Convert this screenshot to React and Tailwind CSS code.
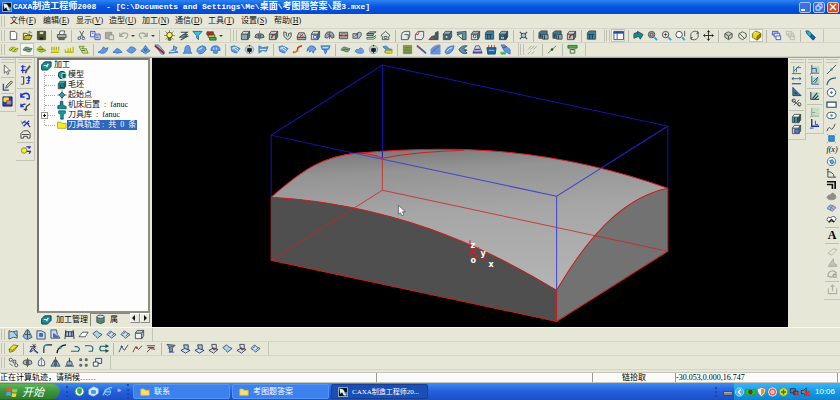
import React, { useState } from 'react';
import clsx from 'clsx';

const K = '#3c4745';
const N = '#3a46b0';
const B = '#7fb2e8';
const T = '#3f7f98';
const Y = '#e3e02a';
const G = '#8d8f88';

// d: path, f: fill, s: stroke
const p = (d, f = 'none', s = K, w = 0.9) => <path d={d} fill={f} stroke={s} strokeWidth={w} />;
const dot = (x, y, r = 1.2, f = 'none', s = K) => <circle cx={x} cy={y} r={r} fill={f} stroke={s} />;

const cube = (front = '#8fa8ac', top = '#cfdcd8', side = T) => (
    <>
        {p('M1.5 4.5h7v6h-7z', front)}
        {p('M1.5 4.5l2-3h7l-2 3z', top)}
        {p('M8.500 4.500l2-3v6l-2 3z', side)}
    </>
);
const sheet = (f = B, s = N) => p('M1 6.500Q3.500 2 6 3.500T11 5Q9 10 6.500 8.500T1 6.500z', f, s);

const icons = {
    // standard
    newFile: p('M2.500 1.500h5l2 2v7h-7z', '#fff'),
    open: <>{p('M1.500 10V3.500h3l1 1h3V6', '#f4ee7a')}{p('M1.500 10.500l2-4.500h7.500l-2 4.500z', '#c9b92c')}{p('M7 2.500q2-2 3.500 1', 'none')}</>,
    save: <>{p('M1.500 1.500h9v9h-9z', '#54561c')}{p('M3.500 1.500h5v3.500h-5z', '#d8d8b8')}{p('M4 8h4v2.500H4z', '#111')}</>,
    print: <>{p('M3.500 5l1-4h5l-1 4', '#fff')}{p('M1.500 5h9.500v3.500h-9.500z', '#b4b4ac')}{p('M3 8.500h6v2H3z', '#7c7c74')}</>,
    cut: <>{p('M4 1l4 7M8.500 1l-4 7', 'none', K)}{dot(3.500, 9, 1.500, 'none', N)}{dot(8, 9, 1.500, 'none', N)}</>,
    copy: <>{p('M.5 1.500h5v6h-5z', '#dfe6ff', N)}{p('M5.500 4.500h5.500v6H5.500z', '#dfe6ff', N)}{p('M6.500 6.500h3M6.500 8.500h3M2 3.500h2', 'none', N)}</>,
    paste: <>{p('M1.500 2.500h7v7h-7z', '#a9aaa2', G)}{p('M5.500 5.500h5v5h-5z', '#deded4', G)}</>,
    undo: <>{p('M2 3v4h4M2.500 6.500Q5 2 9 3.500t-1 6', 'none', '#a0a198', 1.300)}</>,
    redo: <>{p('M10 3v4H6M9.500 6.500Q7 2 3 3.500t1 6', 'none', '#a0a198', 1.300)}</>,
    bulb: <>{p('M6 0v12M0 6h12M1.500 1.500l9 9M10.500 1.500l-9 9', 'none', '#8a8a18')}{dot(6, 5.500, 3, '#fdfb40', K)}{p('M4.500 9h3v2h-3z', '#777')}</>,
    layers: <>{p('M3 2.500h7L4 7h6L3 11', 'none', K, 1.200)}{p('M1.500 8l4-3 5 0-4 3z', '#5b8ce0')}</>,
    filter: p('M1 1.500h10L7 6v4.500l-2-2V6z', '#37c9dc', '#145b88'),
    colors: <>{p('M4 8h7v3H4z', '#2fb340')}{p('M2.500 5h7v3h-7z', Y)}{p('M1 2h7v3.500H1z', '#c02828')}</>,

    // features
    box: cube(),
    boxRed: <>{cube('#b7c4c0')}{p('M4 9q0-4 4-4', 'none', '#b8232a', 1.500)}</>,
    boxBlue: <>{cube('#d3dcf5')}{p('M4 6h3v3H4z', '#fff', N)}</>,
    boxGreen: <>{cube('#7fa89c')}{p('M3 7h3v2H3z', '#fff', '#1b6b45')}</>,
    revolve: <>{p('M6 1v10', 'none', '#28a')}{p('M1 8q0-4 4-4v5zM11 8q0-4-4-4v5z', '#7fa0a0')}</>,
    sweep: <>{p('M2 2q-1 6 4 8.500Q11 9 10 3L7 4q1 3-1 3T5 3z', '#c8d8d4')}</>,
    loft: <>{p('M1.500 8.500h9v2h-9zM3 3h6l2 5H1z', '#bcc9c6')}{p('M4 5l4 2M8 4L4 8', 'none', '#a8303a')}</>,
    wheel: <>{p('M1 8q0-6 5-6t5 6L8.500 9 6 6 3.500 9z', '#9ab')}{p('M6 2v8M3 4l6 3', 'none', '#b12d36')}</>,
    frame: <>{p('M1.500 2.500h9v7h-9z', '#9db9ac')}{p('M3.500 4.500h5v3h-5z', '#fff', '#a33')}{p('M1 6h10', 'none', K)}</>,
    twist: <>{p('M1 4h5v5H1zM6 3q5-2 4 3l-3 4', '#b6c0c8')}{p('M3 7l4-4', 'none', '#339')}</>,
    slab: <>{p('M1 4l3-2h7L8 4zM1 4h7v2H1zM1 8h7l3-2', '#a8c8bd')}{p('M1 8v2h7l3-2', 'none', '#1d6b50')}</>,
    house: <>{p('M1 6l5-4.500L11 6 9.500 7v3.500h-7V7z', '#dfe5df')}{p('M4.500 7h3v2h-3z', '#fff')}</>,
    fillet: <>{p('M1.500 10.500V6q0-4 4-4.500h5v6l-2 3z', '#dfe9ea')}{p('M5 5h4v5.500', 'none', K)}</>,
    chamfer: <>{p('M1.500 10.500V5l3-3.500h6v6l-2 3z', '#dfe9ea')}{p('M1.500 5h3l1-3', 'none', '#a33')}</>,
    rib: <>{p('M1 10.500h10v-9L8 3v3L4 7z', '#3b5f62')}{p('M2 9h5', 'none', '#c44')}</>,
    shell: <>{cube('#56707f', '#8fb8cc')}{p('M3.500 6h3v3h-3z', '#bfe3f7')}</>,
    draft: <>{p('M1 2.500l10-1v9l-4 0z', '#5a93aa')}{p('M1 5l6-1 0 6z', '#d8eef4')}</>,
    hole: <>{cube('#dbe2df', '#aab')}{dot(5, 7, 1.500, '#fff', '#333')}</>,
    array: <>{p('M1.500 3l2-2h7v9h-9z', '#3f7f9c')}{p('M2 5h7M4 5v5M7 5v5', 'none', '#123b4c')}</>,
    mold: <>{cube('#3b6d94', '#79b7d8', '#1b3e5e')}{p('M3 6l2 2 2-2v4H3z', '#cfe9f7', '#135')}</>,
    cross: <>{p('M2 2l8 8M10 2l-8 8', 'none', K, 1.200)}{dot(6, 6, 2.500, '#9cc8d8', '#247')}</>,
    film: <>{p('M1 3l2-2h7v8H1z', '#44758e')}{p('M5 5h6v5H5z', '#77a8c0')}{p('M3 4v4M7 6v4', 'none', '#123')}</>,

    // view
    panel: <>{p('M1 1.500h10.500v9H1z', '#fff', '#223a80')}{p('M1 2h10v1.500H1z', '#2c51a8', '#2c51a8')}{p('M4.500 3v7', 'none', '#223a80')}</>,
    redraw: <>{p('M1 9V4l5-2 5 3-3 5-2-3z', '#108e94')}{p('M5 1v4', 'none', K)}</>,
    zoomAll: <>{p('M8 8l3 3', 'none', '#2ba0d8', 2)}{dot(5, 5, 3.500, '#b8bcc0', '#444')}{p('M3.500 3.500h3v3h-3z', 'none', '#444')}</>,
    zoomIn: <>{p('M8 8l3 3', 'none', '#2ba0d8', 2)}{dot(5, 5, 3.500, '#eee', '#444')}{p('M5 3v4M3 5h4', 'none', K)}</>,
    zoomWin: <>{p('M8 8l2.500 3', 'none', '#2ba0d8', 2)}{dot(4.500, 5, 3.500, '#fff', '#444')}{p('M10.500 1v6', 'none', K)}</>,
    rotate: p('M2 8V4q4-5 8-1M10 4v4q-4 5-8 1M9 1l1.500 2.500L8 4M3 11L1.500 8.500 4 8', 'none'),
    pan: p('M6 .5v11M.5 6h11M4.500 2.500L6 .8l1.500 1.700M4.500 9.500L6 11.200l1.500-1.700M2.500 4.500L.8 6l1.700 1.500M9.500 4.500L11.200 6 9.500 7.500', 'none', '#111'),
    wire: <>{p('M2 4l4-2 4 2v4l-4 2.500-4-2.500z', '#c9cac0')}{p('M2 4l4 2.500 4-2.500M6 6.500V10', 'none')}</>,
    hidden: <>{p('M2 4l4-2 4 2v4l-4 2.500-4-2.500z', '#e9eadc')}{p('M3 4l5 5', 'none')}</>,
    shaded: <>{p('M1.500 4l4-3 5 2.500v4l-4 3.500-5-3z', '#e8dc10', '#6d6600')}{p('M6.500 7l4-3v3.500l-4 3.500z', '#8f8500', '#6d6600')}{p('M3 4l2.500-1.500', 'none', '#fff')}</>,
    windows: <>{p('M1.500 1.500h6v4h-6z', '#c8ccff', N)}{p('M3.500 3.500h6v4h-6z', '#e6e8ff', N)}{p('M5.500 6.500h5v4h-5z', '#fff', N)}</>,
    windowsOff: <>{p('M1.500 1.500h6v4h-6zM3.500 3.500h6v4h-6zM5.500 6.500h5v4h-5z', '#e4e4d8', '#b7b8ad')}</>,
    pen: <>{p('M1 1l3 0 7 7-2 3-7-7z', '#28b4cc', '#0a5468')}{p('M7 5l4 3-2 3-3-3z', '#2268c8', '#123c88')}</>,

    // surface machining
    area: <>{sheet('#dede34', '#90962a')}{p('M3 6.500l3-2M6 7.500l3-2', 'none', '#2d7d3f')}</>,
    contour: <>{sheet('#8fb05c', '#3f6c9a')}{p('M3 6.500q3-2 6 0', 'none', '#24488a')}</>,
    areaAlt: <>{p('M1 6l4-4 1 2 5 3-5 2-3-1z', '#b5c42c', '#6a9030')}{p('M3 6h5', 'none', '#2d5fa0')}</>,
    comb: <>{p('M1 9h9M2 3v4M4.500 3v4M7 3v4M9.500 3v4', 'none', '#b3b30c', 1.400)}{p('M2 8h8', 'none', '#e8e020')}</>,
    combLow: <>{p('M1 9h9M1.500 6v3M4.500 5v4M7 4v5M10 3v6', 'none', '#bcbc0a', 1.400)}</>,
    stepper: <>{p('M1 2.500l6 0-3 2.500h5l2 5H5z', '#dfe052', '#6c8c3c')}{p('M4 7h4', 'none', '#256')}</>,
    wave: p('M0 9q4-1 6-6l2 2 3-1q-2 7-7 6z', '#5f9ae6', '#3a6fc4'),
    mound: p('M1 9q2-1 3-3t4 0l3 3q-5 2-10 0z', '#5f9ae6', '#3a6fc4'),
    swell: p('M1 7q2-1 4-4 4 0 6 3-3 4-5 4-4-1-5-3z', '#5f9ae6', '#3a6fc4'),
    ring: <>{p('M6 1.500l2 3 3 3-5 3-5-3 3-3z', '#5f9ae6', '#3a6fc4')}{dot(6, 6.500, 1, '#dff', '#135')}</>,
    slash: <>{p('M1 1h4l6 7v3H8z', '#9ab8e0', '#3a6fc4')}{p('M1 2l10 8', 'none', '#a0202c', 2)}</>,
    lift: <>{p('M1 10q2-4 5-4V2l4 2-2 3 3 2z', '#6ea4e8', '#3a6fc4')}{p('M2 8h5', 'none', '#fff')}</>,
    bell: p('M1 10q2 0 2-3 0-5 3-5.500t3 5.500q0 3 2 3z', '#5f9ae6', '#3a6fc4'),
    pillow: <>{p('M1 8q0-5 6-6 4 0 4 4-3 5-7 5z', '#5f9ae6', '#3a6fc4')}{p('M3 6l4-2', 'none', '#fff')}</>,
    dome: <>{p('M1 7q0-5 5-5t5 5l-3 0 0 3-4 0V7z', '#5d97e4', '#3a6fc4')}{p('M4 4v2M7 4v2', 'none', '#dff')}</>,
    link: <>{p('M1 3l4-1 6 3-4 5-5-2z', '#5f9ae6', '#3a6fc4')}{p('M2 6q4-5 7 0M3 4l6 4', 'none', '#fff')}</>,
    bee: <>{dot(6, 6, 4.500, '#bcd0e8', '#7aa0cc')}{p('M6 1v9M4 5h4v3H4z', '#222', '#111')}{p('M6 2.500v2', 'none', '#ecd800', 2)}</>,
    knot: <>{p('M1 2l4 2 6-1-2 5-4-1-4 3z', '#5f9ae6', '#3a6fc4')}{p('M2 6h7', 'none', '#fff')}</>,
    gash: <>{p('M1 9q5 0 5-3t5-4', 'none', '#c0382c', 1.600)}{p('M1 11q3-5 7-3', 'none', '#e0a850')}</>,
    wing: <>{p('M1 8q1-6 5-6t5 4L9 7l-1 3-2-3-2 2-1-3z', '#6ba0e8', '#3a6fc4')}</>,
    cup: <>{p('M1 2h10L9.500 6h-7zM4 6l2 5 2-5', '#5f9ae6', '#3a6fc4')}{p('M3 4h6', 'none', '#fff')}</>,
    puddle: p('M1 8q1-3 4-2 1-3 4-1 3 4 0 5-6 1-8-2z', '#6ba0e8', '#4c7fcc'),
    fish: <>{p('M1 3q5-2 6 2l4 1-3 4-5-1 1-3z', '#4f9be0', '#3a6fc4')}{p('M4 7h7v3H4z', '#e8d820', '#a0a018')}</>,
    grass: <>{p('M1.500 1.500h9v9h-9z', '#8c9c38', '#7d8d34')}{p('M2 4h8M2 6.500h8M2 9h8', 'none', '#4f7c5c')}</>,
    trim: <>{p('M1 2l10 8', 'none', '#3a6fc4', 2)}{p('M1 1l10 9', 'none', '#c0384c')}</>,
    curve: <>{p('M1 11V6q3-5 10-5v10z', '#5d97e4', '#5d97e4')}{p('M1 10L10 2', 'none', '#c03a50')}</>,
    scroll: <>{p('M1 9q2-7 10-7-1 8-8 9z', '#5d97e4', '#3a6fc4')}{p('M3 8q3-4 6-4', 'none', '#fff')}</>,
    shellSea: <>{p('M1 6q3-5 9-4L6 5l4 2-3 0 3 3Q4 12 1 6z', '#5c8fa8', '#28506c')}</>,
    tower: <>{p('M1 10l3-8h4l3 8z', '#d4d4ec', '#4b4b90')}{p('M1 9h10M3 6h6', 'none', '#4b4b90', 1.500)}</>,
    basket: <>{p('M1 4h10l-1 7H2z', '#2468a8', '#123c70')}{p('M3 4V1M6 4V1M9 4V1', 'none', '#a03030')}{p('M3 7h6', 'none', '#9fd0e8')}</>,
    parrot: <>{p('M1 1h4l6 5v5L5 8z', '#5d97e4', '#3a6fc4')}{p('M1 9h5v2H1z', '#31c04c', '#31c04c')}{p('M3 4l4-1', 'none', '#d03030', 1.500)}</>,
    hatch: p('M1 6l4-4M4 6l4-4M7 6l4-4M1 11l3-3M5 11l3-3', 'none', '#86ac7a'),
    stroke: <>{p('M1 10l9-8', 'none', '#3b7a34')}{dot(5.500, 6, 1, '#2a5a28', '#2a5a28')}</>,
    drill: <>{p('M1 1.500h10v3H1z', '#49b04c', '#1f6d2c')}{p('M3.500 5v5h5V5', '#dfe8df', '#1f6d2c')}{p('M4 6h4', 'none', '#d02020', 1.500)}</>,

    // left
    pointer: p('M2.500 1v9l2-2 1.500 3.500 1.500-.7L6 7.500h3z', '#fff', K, 0.8),
    pencil: <>{p('M1.500 4v7h6', 'none', N, 1.500)}{p('M4 9l1-3 5-5 1.500 1.500-5 5z', '#c8c8b0')}</>,
    picture: <>{p('M1 1h10v10H1z', '#1f3fd0', '#101060')}{p('M2 2h5v4H2z', '#f0e020', '#f0e020')}{p('M5 5h5v4H5z', '#3fc8c8', '#d03030')}</>,
    sketch: <>{p('M1 3h5M3 1v9M1 7h5', 'none', '#1c2cd0', 1.300)}{p('M6 10l1-3 4-5', 'none', '#555', 2)}</>,
    mirror: <>{p('M1 2h3v8H1M4 2v8', 'none', '#444')}{p('M6.500 3h3v6h-3M9 1l2 2-2 2M8 6h3', 'none', '#1c2cd0', 1.200)}</>,
    turn: p('M1 2.500v4h4M1.500 5.500Q3 2.500 7 2.500q4 1 3 6l-3 0', 'none', '#1c2cd0', 1.500),
    turnAlt: <>{p('M1 2v3h3M1.500 4.500Q3 2 6 2.500', 'none', '#1c2cd0', 1.300)}{p('M6 10l1-5 4-3M4 8h4', 'none', '#444', 1.400)}</>,
    spray: <>{p('M2 6l4-3M4 9l6-6M8 6l3 4M5 5l5 1', 'none', '#1c2cd0', 1.200)}{p('M1 3l3 6', 'none', '#888')}</>,
    car: <>{p('M1 10V5l3-3h5l2 3v5H8V8H4v2zM2 6h8', '#eceadc', '#333')}</>,
    lamp: <>{dot(4.500, 6, 3, '#f3ee30', '#8a8a18')}{p('M7 2h4L9.500 4M7.500 7h4L10 9.500', 'none', '#1c2cd0', 1.400)}</>,

    // right
    chart: <>{p('M1 10.500h10M3 2v8M3 8l6-6M6 9V4l5 0', 'none', '#286c80')}</>,
    measure: <>{p('M1 9.500h10', 'none', '#2b6ccc', 1.500)}{p('M1 4h10M3 2.500L1 4l2 1.500M9 2.500L11 4 9 5.500', 'none', '#31516c')}</>,
    triangle: p('M2 1.500v9h9zM4.500 6.500v2h2z', '#3c7da0', '#163c5c'),
    scissors: <>{p('M1 3l9 7M3 9l6-6', 'none')}{dot(9, 8, 1.800)}{dot(3, 4, 1.800)}</>,
    building: <>{cube('#4a9cc4', '#dff', '#246')}{p('M4 5v5M7 5v5', 'none', '#123')}</>,
    buildingAlt: <>{cube('#bcd', '#eef')}{p('M4 6h5v4H4z', '#5a78c8', N)}</>,
    axis: <>{p('M3 1v8h8V3H3', '#b4d8c0', '#b4d8c0')}{p('M3 1v9h8M3 10L1 11.500M3 5h5v4', 'none', '#2a4a90')}</>,
    axisAlt: <>{p('M3 1v8h8V3H3', '#b4d8c0', '#b4d8c0')}{p('M3 1v9h8M4 8l6-6M6 9q3-2 3-6', 'none', '#2a4a90')}</>,
    axisMove: <>{p('M3 2h8v7H3z', '#b4d8c0', '#b4d8c0')}{p('M2 1v8h9M4 8l5-6M6 9l4-4', 'none', '#234', 1.100)}</>,
    axisDim: <>{p('M3 1h8v8H3z', '#c4e0c4', '#c4e0c4')}{p('M3 1v9h8M1 11l2-1M3 6h4', 'none', '#7e9f90')}</>,
    axisBlue: <>{p('M3 1v8h8', 'none', '#1c2cb0', 1.500)}{p('M7 3v4h3M1 11h4', 'none', '#1c2cb0')}</>,
    line: <>{p('M1 11L11 1', 'none', '#303838')}{dot(6, 6, 1, '#36a0d0', '#36a0d0')}</>,
    arc: p('M1 10Q2 2 11 2', 'none', '#32667c', 1.200),
    circle: <>{dot(6, 6, 4.500, '#fff', '#28486c')}{dot(6, 6, 1, '#2b7cc0', '#2b7cc0')}</>,
    rect: p('M1 3.500h10v5.500H1z', '#fff', '#28486c', 1.300),
    ellipse: <><ellipse cx="6" cy="6" rx="5" ry="3.500" fill="#fff" stroke="#28486c" />{dot(6, 6, 1, '#2b9cd0', '#2b9cd0')}</>,
    spline: p('M1 10q2-6 4-3t5-5', 'none', '#333'),
    point: <>{p('M3 3h6v6H3z', '#2f8fd8', '#2468a8')}{p('M1 1l2 2M11 1L9 3M1 11l2-2M11 11L9 9', 'none', '#8ba8c0')}</>,
    polygon: <>{dot(6, 6, 4.500, '#fff', '#4a6c8c')}{p('M4 5l3-1 2 3-3 2z', '#53b4e8', '#2468a8')}</>,
    graph: p('M2 1v9h9M2 4q6 0 7 6M1 2l1-1 1 1', 'none', '#333'),
    offset: p('M1 3h9v8M1 6h6v5', 'none', '#111', 1.800),
    blob: p('M1 7q1-3 4-3l2-2 3 2q2 4-1 5-6 2-8-2z', '#8d8e84', '#8d8e84'),
    flower: <>{p('M1 7l4-4 6 3-4 4z', '#8cc4f0', '#4878c0')}{p('M3 4l5 4M8 3L4 9', 'none', '#d05070')}</>,
    cloud: <>{p('M1 6q1-4 4-2 4-3 6 1-1 4-5 3-4 2-5-2z', '#fff', '#345')}{p('M3 9l3-3 3 3', 'none', '#222', 1.500)}</>,
    eraser: p('M1 8l6-5 4 1-6 6z', 'none', '#b0b1a6'),
    ramp: p('M1 10.500h10M2 9l5-7v4l4 3z', '#c4c5ba', '#a4a59a'),
    swirl: <>{p('M1 9q0-6 6-6l3 2-5 5zM7 7h3v3H7z', 'none', '#a4a59a', 1.300)}</>,
    anchor: p('M1.500 5v5.500h9V5M6 1v7M4 3l2-2 2 2', 'none', '#b0b1a6', 1.200),

    // surfaces and curve edit
    surfA: <>{p('M1 2l4 1 5-1v8l-4-1-5 2z', '#a9d4f0')}{p('M6 3l4 5', 'none', '#246')}</>,
    surfB: <>{p('M5 1h2l4 8-4 2H4L1 8z', '#8cb8e0')}{p('M6 1v10M3 6h6', 'none', K)}</>,
    surfC: <>{p('M1 2h5l4 2v7H1z', '#c4dcf4', '#345')}{p('M4 5h3v3H4z', '#5870d0', N)}</>,
    surfD: <>{p('M1 1h6l1 5 3 4H1z', '#c4dcf4', '#345')}{p('M4 5l5 4H4z', '#5870d0', N)}</>,
    surfE: <>{p('M2 3h8v5H2z', '#a9c8f0', '#223')}{p('M2 1l-1 10M10 1l1 10M5 3v5M8 3v5', 'none', '#223')}</>,
    plane: p('M1 8.500l4-5h6l-3 5z', '#fff', '#345'),
    quilt: <>{p('M1 5l4-3 2 2 4 2-5 4-2-2z', '#a9d4f0', '#345')}</>,
    quiltLine: <>{p('M1 6l4-4 2 2 4 2-5 4-2-2z', '#cfe4f8', '#345')}{p('M3 6l3-3M6 8l3-3', 'none', N)}</>,
    solid: cube('#eef2ee', '#a9d4f0', '#cde'),
    rubber: <>{p('M1 7l5-5 5 1-5 6-4 1z', '#f0e428', '#6e6a10')}{p('M1 7l4 1 6-5', 'none', '#6e6a10')}</>,
    trimCurve: <>{p('M5 1l3 5-5 4M8 1L6 6l4 4M2 4h7', 'none', '#334')}{p('M2 10l3-5M7 8l4 3', 'none', N, 1.500)}</>,
    corner: <>{p('M2 11V6q0-4 4-4h5', 'none', '#223', 1.200)}{p('M2 6q0-4 4-4', 'none', '#39c', 1.500)}</>,
    bend: <>{p('M1 11q1-5 4-7t6-2', 'none', '#111', 1.400)}{dot(5, 5, 1, '#39c', '#29a')}</>,
    extend: p('M1 9h8q3-3-1-5H5', 'none', '#268', 1.300),
    hook: p('M1 3h6q4 1 2 6H5', 'none', '#268', 1.300),
    parallel: p('M10 3.500H3q-2 2.500 0 5h7M8 2l3 1.500L8 5M8 7l3 1.500L8 10', 'none', '#175a5a', 1.200),
    splineB: <>{p('M1 10l3-6 3 4 4-6', 'none', '#334')}{dot(4, 4, 0.8, N, N)}</>,
    splineR: <>{p('M1 10l3-6 3 3 4-4', 'none', '#334')}{dot(5, 5, 0.8, '#c22', '#c22')}</>,
    splineS: <>{p('M1 3h9M1 10l4-4 5 1', 'none', '#334')}{p('M2 5h7', 'none', '#c22', 1.400)}</>,
    plug: <>{p('M1 1.500l9 1-3 3v4H4v-4z', '#7c9cc0')}{p('M3 10h6M2 6l6-3', 'none', N)}</>,
    patch: <>{p('M4 2h5v6l-4-1z', '#9cc4e4', '#234')}{p('M1 8l4-2 6 2-5 3z', '#cfe4f8', '#234')}</>,
    patchR: <>{p('M4 1.500h5v5l-4 0zM1 8l4-2 6 1-5 4z', '#cfe4f8', '#334')}{p('M6 5l1 3', 'none', '#c22', 1.600)}</>,
    nodes: <>{dot(3, 3, 1.700, '#fff')}{dot(7, 5, 1.700, '#bcd')}{dot(9, 9, 1.700, '#fff')}{p('M2 7l3 3', 'none')}</>,
    mirrorH: <>{p('M6 1v10M2 4l3-1v6L1 7zM10 4L7 3v6l4-2z', '#a8b8b8')}</>,
    drop: <>{p('M6 1Q1 5 3 9.500h6Q11 5 6 1z', '#eef', '#345')}{p('M6 1v9', 'none', '#29c')}</>,
    mirrorV: <>{p('M5 3v7H1zM7 3v7h4z', '#7ab0d0', '#345')}{p('M6 0v11', 'none', K)}</>,
    stamp: <>{p('M6 1v5M3 9q0-5 3-5t3 5zM1 10h10', '#9bbcd8', '#234')}</>,
    grid4: p('M2 2h2v2H2zM8 2h2v2H8zM2 8h2v2H2zM8 8h2v2H8z', '#aaa', K),
    scale: <>{p('M4 1.500h6.500v5.500H4z', '#dbe8f4', '#234')}{p('M1.500 5.500h5v4.500h-5z', '#fff', '#234')}</>,

    // tree
    gear: <>{p('M0 6l4-4h7v5l-4 4H1z', '#178f94', '#123')}{p('M3 6h4M8 4l-2 4', 'none', '#dff', 1.300)}</>,
    model: <>{dot(6, 6, 4.500, '#189b9b', '#123')}{p('M6 4h5v6H6z', '#0c5c5c', '#dff')}</>,
    blank: <>{cube('#109090', '#20b0b0', '#065858')}{p('M4 6v3h3', 'none', '#024')}</>,
    origin: <>{p('M6 .5v11M.5 6h11', 'none', '#444')}{p('M6 2.500L9.500 6 6 9.500 2.500 6z', '#22a0a0', '#245')}</>,
    machine: p('M1 10.500V7l3-1V1.500h3V6l4 2v2.500z', '#0f9393', '#044'),
    tool: p('M2 1h8v3L7.500 5v6h-3V5L2 4z', '#12a09c', '#055'),
    folder: <>{p('M.5 10V2.500h4l1 1.500H11v6z', '#f6ec24', '#a89c10')}</>,
    database: <>{p('M2 3v6q4 3 8 0V3', '#1fae84', '#444')}<ellipse cx="6" cy="3" rx="4" ry="1.800" fill="#dde" stroke="#444" />{p('M2 7q4 2 8 0', 'none', '#d33')}</>,

    // taskbar
    msn: <>{dot(6, 6, 4.800, '#fff', '#3bb54a')}{p('M4 3h4v4L6 9 4 7z', '#2fae44', '#2fae44')}</>,
    desktop: <>{p('M1 4l5-3 5 2v5l-5 3-5-2z', '#d5ecfa', '#b8dcf4')}{p('M4 5h4v3H4z', '#4aa0d8', '#3288c0')}</>,
    ie: <>{dot(6, 6.500, 3.500, 'none', '#7cd0ff')}{p('M3 6.500h6M1 10Q6 0 11 2', 'none', '#7cd0ff', 1.400)}</>,
    winFolder: p('M1 10V2.500h4l1 1.500h5v6z', '#fbdf6c', '#e2b83c'),
    caxa: <>{p('M.5.5h11v11H.5z', '#0a1216', '#c8dce4')}{p('M2 2l4 1 4 7H7L5 6 3 8z', '#e8f4f8', '#e8f4f8', 0.5)}{p('M8 7l3 0v3z', '#35b4c8', '#35b4c8')}</>,
    keyboard: <>{p('M1 5.500h10v4H1z', '#d4d4d4', '#303030')}{p('M2 7.500h8', 'none', '#444')}</>,
    back: <>{dot(6, 6, 5, '#4eb0f4', '#a8dcff')}{p('M7.500 3L4.500 6l3 3', 'none', '#fff', 1.500)}</>,
    nvidia: <>{p('M0 3h12v6H0z', '#18c828', '#18a828')}{dot(6, 6, 2, '#c02020', '#701010')}</>,
    shield: <>{p('M6 .5l5 2q0 6-5 9-5-3-5-9z', '#f0f0f0', '#c07020')}{p('M6 2.500l3 1q0 4-3 6z', '#e08828', '#e08828')}</>,
    record: <>{dot(6, 6, 4.800, '#f04830', '#fff')}{dot(6, 6, 2, '#fff', '#fff')}{p('M4.500 6h3', 'none', '#d02020')}</>,
    plus: <>{dot(6, 6, 5, '#e8dc20', '#60a020')}{p('M6 3v6M3 6h6', 'none', '#20802c', 1.800)}</>,
    net: <>{p('M1 2h6v5H1zM5 5h5v4H5z', '#6078a0', '#223')}{p('M6 6l5 5M11 6l-5 5', 'none', '#e03030', 1.500)}</>,
    speaker: <>{p('M1 4h3l3-3v9L4 8H1z', '#788', '#223')}{p('M5 5l6 6M11 5l-6 6', 'none', '#e82828', 2)}</>,
};

const Icon = ({ name, className = 'size-3' }) => (
    <svg viewBox="0 0 12 12" className={clsx('shrink-0', className)} aria-hidden="true">
        {icons[name]}
    </svg>
);

const CJK = "font-['Liberation_Serif','Noto_Sans_CJK_SC',serif]";

const Sep = ({ vertical }) => (
    vertical
        ? <div className="h-[5px] w-full flex items-center px-px"><div className="w-full h-px bg-[#c0c1b4]" /></div>
        : <div className="w-1.5 h-3 flex justify-center shrink-0"><div className="w-px h-full bg-[#b9baad]" /></div>
);

const Grip = () => <div className="w-1 h-[11px] mx-px border-x border-[#c0c1b4] shrink-0" />;

// '|' is a separator, 'v' a drop-down arrow, a leading '*' marks a pressed button
const ToolItem = ({ id, tall }) => {
    if (id === '|') return <Sep />;
    if (id === 'v') {
        return (
            <button aria-label="More" className="w-1.5 h-3 flex items-center justify-center shrink-0">
                <svg viewBox="0 0 4 2" className="w-1 h-0.5"><path d="M0 0h4L2 2z" fill="#444" /></svg>
            </button>
        );
    }
    const pressed = id.startsWith('*');
    const name = pressed ? id.slice(1) : id;
    return (
        <button
            aria-label={name}
            className={clsx('w-3.5 flex items-center justify-center shrink-0', tall ? 'h-[11px]' : 'h-[13px]', pressed && 'bg-[#f6f6ee] border border-[#c4c5b8]')}
        >
            <Icon name={name} className="size-[11px]" />
        </button>
    );
};

const Toolbar = ({ items }) => (
    <div className="flex items-center h-full border-r border-[#c4c5b8] shrink-0">
        <Grip />
        {items.split(' ').map((id, i) => <ToolItem key={i} id={id} />)}
        <div className="w-1.5" />
    </div>
);

const ToolRow = ({ bars }) => (
    <div className="flex h-3.5 border-b border-[#d4d5c8]">
        {bars.map((b) => <Toolbar key={b} items={b} />)}
    </div>
);

const SideBar = ({ groups, className }) => (
    <div className={clsx('flex flex-col items-center self-start border-b border-r border-[#c4c5b8] pb-1', className)}>
        <div className="h-1 w-3.5 my-px border-y border-[#c4c5b8]" />
        {groups.map((g, i) => (
            <React.Fragment key={g}>
                {i > 0 && <Sep vertical />}
                {g.split(' ').map((id) => <ToolItem key={id} id={id} tall />)}
            </React.Fragment>
        ))}
    </div>
);

const menus = [
    ['文件', 'F'], ['编辑', 'E'], ['显示', 'V'], ['造型', 'U'], ['加工', 'N'],
    ['通信', 'D'], ['工具', 'T'], ['设置', 'S'], ['帮助', 'H'],
];

const standard = 'newFile open save | print | cut copy paste undo v redo v | bulb layers filter colors v';
const features = 'box revolve boxRed sweep loft boxBlue wheel frame twist slab house | fillet chamfer rib shell draft hole array mold | cross | film film boxRed | array';
const view = '*panel | redraw zoomAll zoomIn zoomWin rotate pan | wire hidden *shaded | windows windowsOff | pen';
const machining = 'area *contour areaAlt comb combLow stepper | wave mound swell ring slash lift bell pillow dome | link bee knot | link gash wing cup | contour puddle bee fish | grass trim curve scroll shellSea tower basket parrot';

const tree = [
    ['model', '模型'],
    ['blank', '毛坯'],
    ['origin', '起始点'],
    ['machine', '机床后置  :  fanuc'],
    ['tool', '刀具库  :  fanuc'],
    ['folder', '刀具轨迹 :  共  0  条'],
];

const TitleBar = () => (
    <header className="flex items-center h-3.5 pl-0.5 bg-linear-to-b from-[#2b83f2] via-[#0753e0] to-[#0549cf] text-white">
        <Icon name="caxa" className="size-[10px]" />
        <h1 className="ml-px flex-1 whitespace-pre font-bold text-[8px] leading-3 font-['Liberation_Mono','Noto_Sans_CJK_SC',monospace]">
            CAXA<span className="text-[9px]">制造工程师</span>2008{'  - '}[C:\Documents and Settings\Me\<span className="text-[9px]">桌面</span>\<span className="text-[9px]">考图题答案</span>\<span className="text-[9px]">题</span>3.mxe]
        </h1>
        <div className="flex gap-0.5 pr-px">
            <button aria-label="Minimize" className="w-3 h-[11px] rounded-xs border border-[#a9c4f8] bg-[#3a6fe4] flex items-end p-px">
                <span className="w-1 h-0.5 bg-white" />
            </button>
            <button aria-label="Restore" className="w-3 h-[11px] rounded-xs border border-[#a9c4f8] bg-[#3a6fe4] flex items-center justify-center">
                <svg viewBox="0 0 8 8" className="size-2"><path d="M3 3V1h4v4H5M1 3h4v4H1z" fill="none" stroke="#dfe8ff" /></svg>
            </button>
            <button aria-label="Close" className="w-3 h-[11px] rounded-xs border border-[#f4c0b0] bg-[#df4a26] flex items-center justify-center">
                <svg viewBox="0 0 8 8" className="size-2"><path d="M1 1l6 6M7 1L1 7" fill="none" stroke="#fff" strokeWidth="1.500" /></svg>
            </button>
        </div>
    </header>
);

const MenuBar = () => (
    <nav className="flex items-center h-[15px] border-b border-[#d4d5c8]">
        <Grip />
        <div className="flex gap-2 pl-1">
            {menus.map(([label, key]) => (
                <button key={key} className="w-[25px] text-left whitespace-nowrap text-[8px] leading-3 text-[#111]">
                    {label}(<u>{key}</u>)
                </button>
            ))}
        </div>
    </nav>
);

const TreePanel = ({ selected, onSelect }) => (
    <aside className="w-[113px] mx-0.5 flex flex-col shrink-0">
        <div className="flex-1 bg-[#fdfdfd] border-2 border-[#74756e] border-r-[#8d8e86] border-b-[#8d8e86] pl-0.5">
            <button className="flex items-center h-2.5 gap-0.5 text-[8px] leading-[10px]">
                <Icon name="gear" className="size-[11px]" />加工
            </button>
            <ul className="relative">
                <li aria-hidden="true" className="absolute left-[3px] top-0 h-[55px] border-l border-dotted border-[#a8a8a8]" />
                {tree.map(([icon, label], i) => (
                    <li key={icon} className="flex items-center h-2.5 relative">
                        <span className="w-2.5 ml-1 mr-0.5 border-b border-dotted border-[#a8a8a8]" />
                        {icon === 'tool' && (
                            <button aria-label="Expand" className="absolute left-0 top-0.5 size-[7px] border border-[#999] bg-white flex items-center justify-center">
                                <svg viewBox="0 0 5 5" className="size-[5px]"><path d="M2.500 1v3M1 2.500h3" stroke="#111" /></svg>
                            </button>
                        )}
                        <Icon name={icon} className="size-[10px]" />
                        <button
                            onClick={() => onSelect(i)}
                            className={clsx('px-px whitespace-pre text-[8px] leading-[10px]', selected === i ? 'bg-[#2f66c0] text-white' : 'text-[#111]')}
                        >
                            {label}
                        </button>
                    </li>
                ))}
            </ul>
        </div>
        <div className="flex h-3.5 items-start text-[8px] leading-3">
            <button className="flex items-center gap-1 h-[13px] w-[54px] pl-1 border-r border-[#85867e] whitespace-nowrap">
                <Icon name="gear" className="size-[11px]" />加工管理
            </button>
            <button className="flex items-center gap-1 h-3 flex-1 pl-1 border-t border-[#85867e]">
                <Icon name="database" className="size-[11px]" />属
            </button>
            {['M4 1v6L1 4z', 'M3 1v6l3-3z'].map((d, i) => (
                <button key={d} aria-label={i ? 'Next tab' : 'Previous tab'} className="size-2.5 bg-[#ecebe0] border border-[#fff] border-r-[#888] border-b-[#888]">
                    <svg viewBox="0 0 8 8" className="size-2"><path d={d} fill="#111" /></svg>
                </button>
            ))}
        </div>
    </aside>
);

const Viewport = () => (
    <main className="flex-1 min-w-0 bg-black">
        <svg viewBox="153 58 635 269" className="w-full h-full block">
            <defs>
                <linearGradient id="top" x1="0.35" y1="0" x2="0.5" y2="1">
                    <stop offset="0" stopColor="#7b7b7b" />
                    <stop offset="0.15" stopColor="#949494" />
                    <stop offset="0.45" stopColor="#a6a6a6" />
                    <stop offset="1" stopColor="#b4b4b4" />
                </linearGradient>
            </defs>
            {/* solid */}
            <path d="M272 197C305 168 325 156 357 153Q425 147 490 150.500 580 157 668 188C630 196 595 225 557 290C480 243 390 204 272 197z" fill="url(#top)" />
            <path d="M272 197C390 204 480 243 557 290V321L272 260z" fill="#4f4f4f" />
            <path d="M668 188C630 196 595 225 557 290V321L668 251z" fill="#727272" />
            {/* stock box */}
            <g fill="none" stroke="#1414b4">
                <path d="M272 197V135L383 65 668 126V188M383 65V158" />
                <path d="M272 135L355 153" />
            </g>
            <path d="M355 153L557 196 668 126M557 196V290" fill="none" stroke="#4044cc" />
            <path d="M602 167.500L668 126" fill="none" stroke="#1414b4" />
            {/* model edges */}
            <g fill="none" stroke="#d02024">
                <path d="M272 197C305 168 325 156 357 153Q425 147 490 150.500 580 157 668 188" />
                <path d="M272 197C390 204 480 243 557 290C595 225 630 196 668 188" />
                <path d="M350 153.500Q370 152 383 158 420 151 465 150" />
                <path d="M272 197V260L557 321 668 251V188M557 290V321" />
                <path d="M383 158V190L272 260M383 190L668 251" strokeWidth="0.8" />
                <path d="M470.500 240v15l18 4M470.500 255l9-8M472 249l6 7" />
            </g>
            <g fill="#fff" fontFamily="DejaVu Sans" fontWeight="bold" fontSize="8">
                <text x="471" y="248">z</text>
                <text x="481" y="256">y</text>
                <text x="471" y="263">o</text>
                <text x="489" y="267">x</text>
            </g>
            <path d="M399 205v9l2-1.500 1.500 3 2-1-1.500-3h3z" fill="#fff" stroke="#333" strokeWidth="0.6" />
        </svg>
    </main>
);

const Task = ({ icon, label, active }) => (
    <button
        className={clsx(
            'flex items-center gap-1 w-[97px] h-[15px] pl-1.5 rounded-xs leading-3 text-white whitespace-nowrap',
            active ? 'text-[7px] bg-[#1c4fb4] border border-[#163f98]' : 'text-[8px] bg-[#3c81ee] border border-[#5596f4]'
        )}
    >
        <Icon name={icon} className="size-[10px]" />{label}
    </button>
);

const TaskBar = () => (
    <footer className="flex items-center h-[17px] bg-linear-to-b from-[#3f8cf0] via-[#245edb] to-[#1c4fc4]">
        <button className="flex items-center gap-1 w-[60px] h-[15px] pl-1.5 rounded-r-lg bg-linear-to-b from-[#5eb35e] via-[#3c933c] to-[#2f7c2f] text-white italic text-[11px] leading-3 whitespace-nowrap">
            <svg viewBox="0 0 12 12" className="size-3">
                <path d="M1 2q2-1.500 4.500 0L5 5.500Q3 4 .5 5.500z" fill="#f0582c" />
                <path d="M6.500 2.500Q9 4 11.500 2.500L11 6Q8.500 7 6 6z" fill="#8cd050" />
                <path d="M.5 6.500Q3 5 5 6.500L4.500 10Q2 8.500 0 10z" fill="#58a0f4" />
                <path d="M6 7Q8.500 8 10.500 7l-.5 3.500Q8 11.500 5.500 10.500z" fill="#f8d030" />
            </svg>
            开始
        </button>
        <div className="flex items-center gap-[3px] ml-1.5 pl-1.5 border-l-2 border-dotted border-[#1a49ac]">
            {['msn', 'desktop', 'ie'].map((n) => (
                <button key={n} aria-label={n}><Icon name={n} className="size-[11px]" /></button>
            ))}
        </div>
        <span className="text-white text-[8px] leading-3 ml-1 mb-1">»</span>
        <div className="flex gap-0.5 ml-1.5 pl-1 border-l-2 border-dotted border-[#1a49ac]">
            <Task icon="winFolder" label="联系" />
            <Task icon="winFolder" label="考图题答案" />
            <Task icon="caxa" label="CAXA制造工程师20..." active />
        </div>
        <div className="ml-auto mr-px pl-1.5 border-l-2 border-dotted border-[#1a49ac]">
            <Icon name="keyboard" className="size-[10px]" />
        </div>
        <div className="flex items-center h-full w-[106px] bg-linear-to-b from-[#3cb4f4] via-[#149be8] to-[#0f84d0]">
            {['back', 'nvidia', 'shield', 'record', 'plus', 'net', 'speaker'].map((n) => (
                <Icon key={n} name={n} className="w-[11px] h-2.5" />
            ))}
            <time className="text-white text-[8px] leading-3 ml-1 font-['Liberation_Sans',sans-serif]">10:06</time>
        </div>
    </footer>
);

const App = () => {
    const [selected, setSelected] = useState(5);

    return (
        <div className={`min-h-screen flex flex-col bg-[#e7e7d8] text-black overflow-hidden ${CJK}`}>
            <TitleBar />
            <MenuBar />
            <div className="flex h-3.5 border-b border-[#d4d5c8]">
                <div className="w-[232px] flex"><Toolbar items={standard} /></div>
                <Toolbar items={features} />
                <Toolbar items={view} />
            </div>
            <ToolRow bars={[machining, 'hatch | stroke | drill']} />

            <div className="flex flex-1 border-t border-b border-t-[#a4a59a] border-b-[#f8f8f0]">
                <SideBar className="w-4" groups={['pointer', 'pencil', 'picture']} />
                <SideBar className="w-[19px]" groups={['sketch mirror', 'turn turnAlt', 'spray car', 'lamp']} />
                <TreePanel selected={selected} onSelect={setSelected} />
                <Viewport />
                <SideBar className="w-[18px]" groups={['chart measure triangle scissors', 'building buildingAlt']} />
                <SideBar className="w-[18px]" groups={['axis axisAlt', 'axisMove', 'axisDim axisBlue']} />
                <div className="w-4 flex flex-col items-center self-start border-b border-[#c4c5b8] pb-1">
                    <div className="h-1 w-3 my-px border-y border-[#c4c5b8]" />
                    <div className="flex flex-col h-[161px]">
                        {['line', 'arc', 'circle', 'rect', 'ellipse', 'spline', 'point', 'fx', 'polygon', 'graph', 'offset', 'blob', 'flower', 'cloud'].map((n) => (
                            <button key={n} aria-label={n} className="flex-1 min-h-0 flex items-center justify-center">
                                {n === 'fx' ? <i className="text-[8px] leading-[10px]">f(x)</i> : <Icon name={n} className="size-[11px]" />}
                            </button>
                        ))}
                    </div>
                    <Sep vertical />
                    <button aria-label="Text" className="text-[12px] leading-[11px] font-bold">A</button>
                    <Sep vertical />
                    {['eraser', 'ramp', 'swirl'].map((n) => <ToolItem key={n} id={n} tall />)}
                    <Sep vertical />
                    <ToolItem id="anchor" tall />
                </div>
            </div>

            <ToolRow bars={['surfA surfB surfC surfD surfE plane quilt quiltLine quiltLine solid']} />
            <ToolRow bars={['rubber | trimCurve corner bend extend hook parallel | splineB splineR splineS | plug patch patch patchR quilt patchR quiltLine']} />
            <ToolRow bars={['nodes mirrorH drop mirrorV stamp grid4 scale']} />

            <div className="pt-0.5">
                <div className="flex h-[11px] bg-[#fafaf8] border-y border-[#c4c5b8] text-[8px] leading-[9px] whitespace-nowrap">
                    <span className="w-[376px]">正在计算轨迹，请稍候……</span>
                    <span className="flex-1 border-l border-[#9a9b90]" />
                    <span className="w-[83px] border-l border-[#9a9b90] text-center">链拾取</span>
                    <span className="w-[162px] border-l border-[#9a9b90]">-30.053,0.000,16.747</span>
                    <span className="w-[3px] border-l border-[#9a9b90]" />
                </div>
            </div>
            <TaskBar />
        </div>
    );
};

export default App;
